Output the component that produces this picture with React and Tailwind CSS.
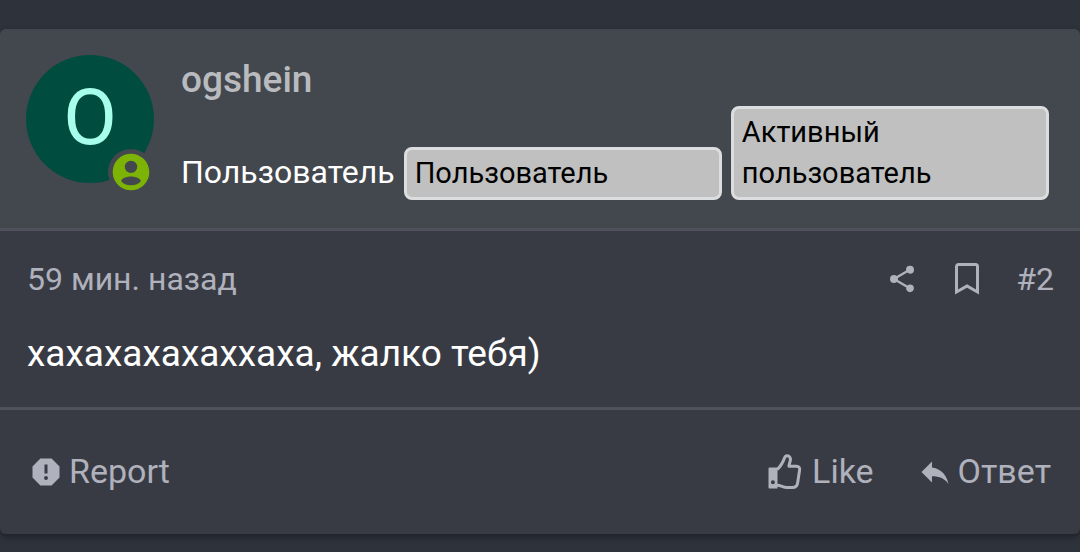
const icons = {
  share: 'M18,16.08C17.24,16.08 16.56,16.38 16.04,16.85L8.91,12.7C8.96,12.47 9,12.24 9,12C9,11.76 8.96,11.53 8.91,11.3L15.96,7.19C16.5,7.69 17.21,8 18,8A3,3 0 0,0 21,5A3,3 0 0,0 18,2A3,3 0 0,0 15,5C15,5.24 15.04,5.47 15.09,5.7L8.04,9.81C7.5,9.31 6.79,9 6,9A3,3 0 0,0 3,12A3,3 0 0,0 6,15C6.79,15 7.5,14.69 8.04,14.19L15.16,18.34C15.11,18.55 15.08,18.77 15.08,19C15.08,20.61 16.39,21.91 18,21.91C19.61,21.91 20.92,20.61 20.92,19A2.92,2.92 0 0,0 18,16.08Z',
  report: 'M13,13H11V7H13M12,17.3A1.3,1.3 0 0,1 10.7,16A1.3,1.3 0 0,1 12,14.7A1.3,1.3 0 0,1 13.3,16A1.3,1.3 0 0,1 12,17.3M15.73,3H8.27L3,8.27V15.73L8.27,21H15.73L21,15.73V8.27L15.73,3Z',
  reply: 'M10,9V5L3,12L10,19V14.9C15,14.9 18.5,16.5 21,20C20,15 17,10 10,9Z',
  user: 'M12,19.2C9.5,19.2 7.8,18.5 6.6,16.9C7,15.2 10,14.4 12,14.4C14,14.4 17,15.2 17.4,16.9C16.2,18.5 14.5,19.2 12,19.2M12,5.8A3.4,3.4 0 0,1 15.4,9.2A3.4,3.4 0 0,1 12,12.6A3.4,3.4 0 0,1 8.6,9.2A3.4,3.4 0 0,1 12,5.8M12,2A10,10 0 0,0 2,12A10,10 0 0,0 12,22A10,10 0 0,0 22,12C22,6.47 17.5,2 12,2Z',
}

const banners = ['Пользователь', 'Активный пользователь']

function Icon({ name, className }) {
  return (
    <svg viewBox="0 0 24 24" fill="currentColor" className={className} aria-hidden="true">
      <path d={icons[name]} />
    </svg>
  )
}

function BookmarkIcon() {
  return (
    <svg viewBox="0 0 26 34" fill="none" stroke="currentColor" strokeWidth="3" className="w-[26px] h-[34px]" aria-hidden="true">
      <path d="M2.5 30V4.5a2 2 0 0 1 2-2h17a2 2 0 0 1 2 2V30L13 24z" />
    </svg>
  )
}

function ThumbIcon() {
  return (
    <svg viewBox="0 0 34 36" className="w-[34px] h-9" aria-hidden="true">
      <path
        d="M9 15.5C12 13.5 14 9.5 15.5 6.5C16.4 4.5 16.6 1.8 19 1.8C21.8 1.8 22.8 4.2 22.3 6.5C21.9 8.5 21 10.5 21 12.3H28.5C31 12.3 32 13.8 31.6 16L29.6 29C29.1 32.3 27.5 33.5 24.5 33.5H19C15 33.5 13 31.3 9 31.3"
        fill="none"
        stroke="currentColor"
        strokeWidth="3"
        strokeLinejoin="round"
      />
      <path
        d="M1.5 13.5H9.5V34.5H1.5Q0.5 34.5 0.5 33.5V14.5Q0.5 13.5 1.5 13.5ZM4.9 26.3a2 2 0 1 0 0 4a2 2 0 1 0 0-4Z"
        fill="currentColor"
        fillRule="evenodd"
      />
    </svg>
  )
}

function Avatar() {
  return (
    <a href="#profile" aria-label="ogshein" className="relative size-32 shrink-0 rounded-full bg-[#004d40] text-[#a7ffeb] flex items-center justify-center text-[78px] leading-none">
      <span className="pb-[3px]">O</span>
      <span className="absolute right-0 -bottom-3 size-[46px] rounded-full bg-[#43474e] text-[#7cb305] flex items-center justify-center">
        <Icon name="user" className="size-11" />
      </span>
    </a>
  )
}

export default function App() {
  return (
    <div className="min-h-screen bg-[#2e323b] pt-[29px] pb-[19px] font-['Roboto',sans-serif] text-[#afb1bc]">
      <article className="rounded-md bg-[#393b44] shadow-[0_3px_6px_rgba(0,0,0,0.35)]">
        <header className="flex gap-[27px] rounded-t-md border-b-3 border-[#4f525b] bg-[#43474e] pt-[26px] pr-[31px] pb-7 pl-[26px]">
          <Avatar />
          <div className="flex-1 min-w-0">
            <h4 className="text-[37px] leading-[50px] font-medium text-[#b9bbbe]">
              <a href="#profile">ogshein</a>
            </h4>
            <div className="mt-px flex items-end gap-[9px] text-white">
              <span className="text-[32px] leading-[55px]">Пользователь</span>
              {banners.map(text => (
                <em key={text} className="flex-1 rounded-lg border-3 border-[#dcdddf] bg-[#c0c0c0] px-2 py-[3px] text-[29px] leading-[41px] not-italic text-black">
                  {text}
                </em>
              ))}
            </div>
          </div>
        </header>

        <div className="border-b-3 border-[#4f525b] px-[27px] pt-[23px] pb-[27px]">
          <div className="flex items-center text-[32px] leading-[50px]">
            <a href="#post"><time>59 мин. назад</time></a>
            <div className="ml-auto -mr-px flex items-center gap-9">
              <button aria-label="Share"><Icon name="share" className="size-8" /></button>
              <button aria-label="Bookmark"><BookmarkIcon /></button>
              <a href="#post-2">#2</a>
            </div>
          </div>
          <p className="mt-6 text-[37px] leading-[52px] text-white">хахахахахаххаха, жалко тебя)</p>
        </div>

        <footer className="flex items-center pl-7 pr-[29px] pt-9 pb-[37px] text-[34px] leading-[51px]">
          <button className="flex items-center gap-[5px]">
            <Icon name="report" className="size-9" />
            Report
          </button>
          <div className="ml-auto flex items-center gap-[43px]">
            <button className="flex items-center gap-[10px]">
              <ThumbIcon />
              Like
            </button>
            <button className="flex items-center gap-[5px]">
              <Icon name="reply" className="size-9" />
              Ответ
            </button>
          </div>
        </footer>
      </article>
    </div>
  )
}
